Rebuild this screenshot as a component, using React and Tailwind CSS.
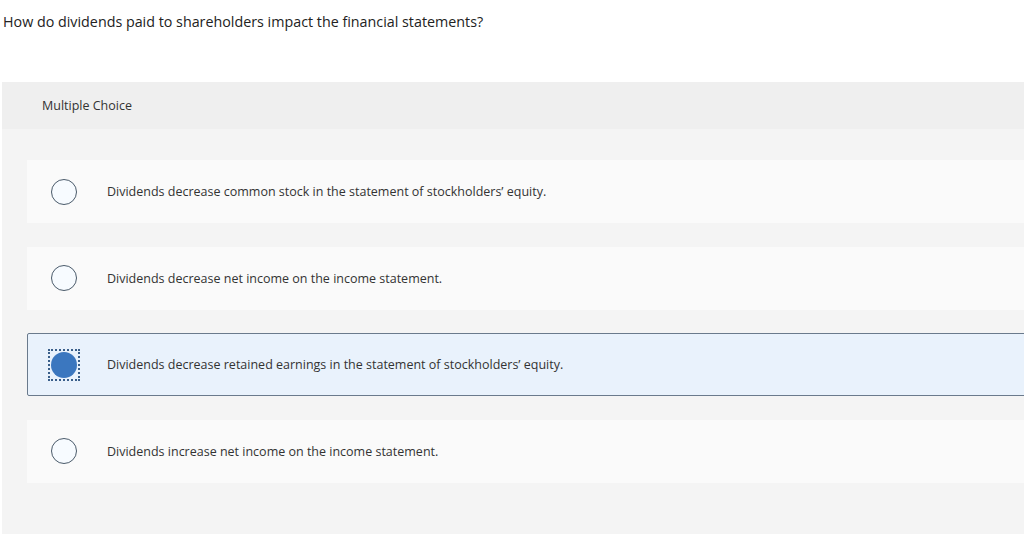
import React, { useState } from 'react'

const options = [
  'Dividends decrease common stock in the statement of stockholders\u2019 equity.',
  'Dividends decrease net income on the income statement.',
  'Dividends decrease retained earnings in the statement of stockholders\u2019 equity.',
  'Dividends increase net income on the income statement.',
]

const Option = ({ text, selected, onClick }) => (
  <div
    onClick={onClick}
    className={`flex items-center h-[63px] ml-[25px] mr-[-10px] cursor-pointer ${
      selected ? 'bg-[#e9f2fc] border border-[#6a7a8c] rounded-l-[2px]' : 'bg-[#fafafa] border border-transparent'
    }`}
  >
    <div className="w-[72px] flex justify-center">
      {selected ? (
        <div className="p-[1px] border-2 border-dotted border-[#3a5f8a]">
          <div className="w-[26px] h-[26px] rounded-full bg-[#3b77bf]" />
        </div>
      ) : (
        <div className="w-[26px] h-[26px] rounded-full border border-[#4a5a6a] bg-[#f7fbff]" />
      )}
    </div>
    <span className="text-[12.5px] text-[#333] ml-[7px] mt-[2px]">{text}</span>
  </div>
)

const App = () => {
  const [picked, setPicked] = useState(2)
  return (
    <div className="w-[1024px] h-[537px] bg-white overflow-hidden" style={{ fontFamily: '"Open Sans", sans-serif' }}>
      <p className="text-[14.3px] text-[#222] pl-[3px] pt-[13px] leading-[18px]">
        How do dividends paid to shareholders impact the financial statements?
      </p>
      <div className="ml-[2px] mt-[51px] h-[452px] bg-[#f4f4f4]">
        <div className="h-[47px] bg-[#efefef] flex items-center pl-[40px]">
          <span className="text-[12.5px] text-[#333] mt-[2px]">Multiple Choice</span>
        </div>
        <div className="flex flex-col gap-[23.5px] pt-[31px]">
          {options.map((it, i) => (
            <Option key={i} text={it} selected={picked === i} onClick={() => setPicked(i)} />
          ))}
        </div>
      </div>
    </div>
  )
}

export default App
